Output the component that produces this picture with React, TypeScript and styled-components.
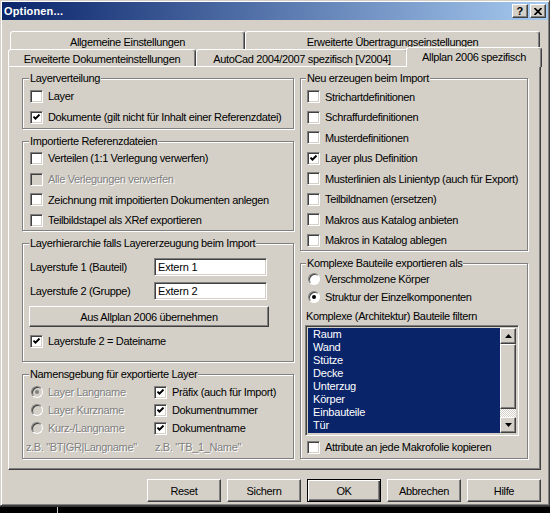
import React from 'react';
import styled, { createGlobalStyle, css } from 'styled-components';

const GlobalStyle = createGlobalStyle`
  html, body {
    margin: 0;
    padding: 0;
    background: #000;
  }
  body {
    font-family: 'Liberation Sans', Arial, sans-serif;
    font-size: 11px;
    letter-spacing: -0.35px;
    color: #000;
  }
  * {
    box-sizing: border-box;
  }
`;

const raised = css`
  border: 1px solid;
  border-color: #fff #404040 #404040 #fff;
  box-shadow: inset -1px -1px 0 #808080, inset 1px 1px 0 #d4d0c8;
`;

const sunken = css`
  border: 1px solid;
  border-color: #808080 #fff #fff #808080;
  box-shadow: inset 1px 1px 0 #404040, inset -1px -1px 0 #d4d0c8;
`;

const Window = styled.div`
  width: 550px;
  height: 506px;
  padding: 1px;
  background: #d4d0c8;
  border: 1px solid;
  border-color: #d4d0c8 #404040 #404040 #d4d0c8;
  box-shadow: inset 1px 1px 0 #fff, inset -1px -1px 0 #808080;
  display: flex;
  flex-direction: column;
`;

const TitleBar = styled.div`
  height: 18px;
  flex: none;
  display: flex;
  align-items: center;
  padding: 0 2px 0 2px;
  background: linear-gradient(to right, #0a246a, #a6caf0);
  color: #fff;
  font-weight: bold;
  font-size: 11px;
  letter-spacing: 0.15px;
`;

const TitleText = styled.span`
  flex: 1;
`;

const CaptionButtons = styled.div`
  display: flex;
  gap: 2px;
`;

const CaptionButton = styled.div`
  width: 16px;
  height: 14px;
  background: #d4d0c8;
  ${raised};
  color: #000;
  display: flex;
  align-items: center;
  justify-content: center;
  font-size: 11px;
  font-weight: bold;
  line-height: 1;
`;

const Body = styled.div`
  flex: 1;
  display: flex;
  flex-direction: column;
  padding: 11px 7px 0 6px;
`;

const TabRow = styled.div<{ $indent: number; $h: number }>`
  display: flex;
  align-items: flex-end;
  height: ${(p) => p.$h}px;
  padding-left: ${(p) => p.$indent}px;
`;

const Tab = styled.div<{ $w: number; $active?: boolean }>`
  flex: none;
  width: ${(p) => p.$w}px;
  height: 100%;
  background: #d4d0c8;
  border: 1px solid;
  border-bottom: none;
  border-color: #fff #404040 transparent #fff;
  border-radius: 3px 3px 0 0;
  box-shadow: inset -1px 0 0 #808080;
  display: flex;
  align-items: center;
  justify-content: center;
  padding-top: 2px;
  white-space: nowrap;
  ${(p) =>
    p.$active &&
    css`
      position: relative;
      z-index: 1;
      height: 20px;
      margin: 0 0 -1px -2px;
      padding-top: 0;
      padding-bottom: 2px;
    `}
`;

const TabPanel = styled.div`
  height: 404px;
  flex: none;
  border: 1px solid;
  border-color: #fff #404040 #404040 #fff;
  box-shadow: inset -1px -1px 0 #808080;
  padding: 5px 0 0 13px;
  display: grid;
  grid-template-columns: 272px 228px;
  column-gap: 6px;
  align-items: start;
`;

const Column = styled.div`
  display: flex;
  flex-direction: column;
  gap: 6px;
`;

const Group = styled.fieldset<{ $h: number; $pl?: number }>`
  margin: 0;
  min-width: 0;
  height: ${(p) => p.$h}px;
  padding: 0 6px 0 ${(p) => p.$pl ?? 7}px;
  border: 1px solid #808080;
  box-shadow: inset 1px 1px 0 #fff, 1px 1px 0 #fff;
`;

const Caption = styled.legend`
  margin-left: -1px;
  padding: 0 1px;
  line-height: 13px;
  background: #d4d0c8;
`;

const Stack = styled.div<{ $pt?: number }>`
  display: flex;
  flex-direction: column;
  padding-top: ${(p) => p.$pt ?? 0}px;
`;

const Row = styled.div<{ $h: number; $disabled?: boolean }>`
  display: flex;
  align-items: center;
  gap: 5px;
  height: ${(p) => p.$h}px;
  white-space: nowrap;
  ${(p) =>
    p.$disabled &&
    css`
      color: #808080;
      text-shadow: 1px 1px 0 #fff;
    `}
`;

const Box = styled.span<{ $disabled?: boolean }>`
  flex: none;
  width: 13px;
  height: 13px;
  background: ${(p) => (p.$disabled ? '#d4d0c8' : '#fff')};
  ${sunken};
  display: flex;
  align-items: center;
  justify-content: center;
`;

const RadioDot = styled.span<{ $on?: boolean; $disabled?: boolean }>`
  flex: none;
  position: relative;
  width: 12px;
  height: 12px;
  margin-left: 1px;
  border-radius: 50%;
  background: ${(p) => (p.$disabled ? '#d4d0c8' : '#fff')};
  border: 1px solid;
  border-color: #808080 #fff #fff #808080;
  box-shadow: inset 1px 1px 0 #404040;
  &::after {
    content: '';
    position: absolute;
    left: 3px;
    top: 3px;
    width: 4px;
    height: 4px;
    border-radius: 50%;
    background: ${(p) => (!p.$on ? 'transparent' : p.$disabled ? '#808080' : '#000')};
  }
`;

const FieldRow = styled.div<{ $mt?: number }>`
  display: grid;
  grid-template-columns: 124px 113px;
  align-items: center;
  height: 18px;
  margin-top: ${(p) => p.$mt ?? 0}px;
`;

const TextInput = styled.div`
  height: 18px;
  background: #fff;
  ${sunken};
  padding: 0 3px;
  display: flex;
  align-items: center;
  letter-spacing: -0.2px;
`;

const WideButton = styled.div`
  width: 240px;
  height: 21px;
  margin: 6px 0 4px -1px;
  background: #d4d0c8;
  ${raised};
  display: flex;
  align-items: center;
  justify-content: center;
`;

const NameGrid = styled.div`
  display: grid;
  grid-template-columns: 124px 1fr;
  padding-top: 2px;
`;

const Hint = styled.div<{ $shift?: number }>`
  height: 19px;
  display: flex;
  align-items: center;
  margin-left: ${(p) => p.$shift ?? 0}px;
  color: #808080;
  text-shadow: 1px 1px 0 #fff;
  white-space: nowrap;
`;

const Label = styled.div`
  height: 19px;
  display: flex;
  align-items: center;
  margin-left: -1px;
`;

const ListBox = styled.div`
  width: 214px;
  height: 111px;
  margin-left: -2px;
  ${sunken};
  padding: 2px;
  display: grid;
  grid-template-columns: 1fr 16px;
  overflow: hidden;
`;

const ListItems = styled.div`
  background: #0a246a;
  color: #fff;
  padding-left: 5px;
  overflow: hidden;
  line-height: 13px;
  letter-spacing: -0.2px;
`;

const ScrollBar = styled.div`
  display: flex;
  flex-direction: column;
`;

const ScrollPart = styled.div<{ $h?: number }>`
  flex: ${(p) => (p.$h ? `0 0 ${p.$h}px` : '1')};
  background: #d4d0c8;
  ${raised};
  display: flex;
  align-items: center;
  justify-content: center;
`;

const ScrollTrack = styled.div`
  flex: 1;
  background: repeating-conic-gradient(#d4d0c8 0 25%, #fff 0 50%) 0 0 / 2px 2px;
`;

const ButtonRow = styled.div`
  display: flex;
  justify-content: flex-end;
  gap: 6px;
  margin-top: 9px;
`;

const DialogButton = styled.div<{ $default?: boolean }>`
  width: 74px;
  height: 23px;
  background: #d4d0c8;
  ${raised};
  display: flex;
  align-items: center;
  justify-content: center;
  ${(p) =>
    p.$default &&
    css`
      border-color: #000;
      box-shadow: inset 1px 1px 0 #fff, inset -1px -1px 0 #404040, inset -2px -2px 0 #808080;
    `}
`;

const Taskbar = styled.div`
  height: 7px;
  background: #000;
  border-top: 1px solid #303030;
  display: flex;
`;

const TaskbarMark = styled.span`
  width: 1px;
  height: 6px;
  margin-left: 57px;
  background: #c8c8c8;
`;

const Check = () => (
  <svg width="7" height="7" viewBox="0 0 7 7">
    <polyline points="0.5,2.6 2.5,4.6 6.5,0.6" fill="none" stroke="#000" strokeWidth="2" />
  </svg>
);

const CloseGlyph = () => (
  <svg width="8" height="7" viewBox="0 0 8 7">
    <path d="M0.5 0 L7.5 7 M7.5 0 L0.5 7" stroke="#000" strokeWidth="1.7" />
  </svg>
);

const Arrow = ({ up }: { up?: boolean }) => (
  <svg width="7" height="4" viewBox="0 0 7 4">
    <polygon points={up ? '3.5,0 7,4 0,4' : '0,0 7,0 3.5,4'} fill="#000" />
  </svg>
);

const CheckItem = ({
  label,
  checked,
  disabled,
  h,
}: {
  label: string;
  checked?: boolean;
  disabled?: boolean;
  h: number;
}) => (
  <Row $h={h} $disabled={disabled}>
    <Box $disabled={disabled}>{checked && <Check />}</Box>
    <span>{label}</span>
  </Row>
);

const RadioItem = ({
  label,
  on,
  disabled,
  h,
}: {
  label: string;
  on?: boolean;
  disabled?: boolean;
  h: number;
}) => (
  <Row $h={h} $disabled={disabled}>
    <RadioDot $on={on} $disabled={disabled} />
    <span>{label}</span>
  </Row>
);

const importOptions = [
  { label: 'Strichartdefinitionen' },
  { label: 'Schraffurdefinitionen' },
  { label: 'Musterdefinitionen' },
  { label: 'Layer plus Definition', checked: true },
  { label: 'Musterlinien als Linientyp (auch für Export)' },
  { label: 'Teilbildnamen (ersetzen)' },
  { label: 'Makros aus Katalog anbieten' },
  { label: 'Makros in Katalog ablegen' },
];

const parts = ['Raum', 'Wand', 'Stütze', 'Decke', 'Unterzug', 'Körper', 'Einbauteile', 'Tür', 'Fenster'];

export default function App() {
  return (
    <>
      <GlobalStyle />
      <Window>
        <TitleBar>
          <TitleText>Optionen...</TitleText>
          <CaptionButtons>
            <CaptionButton>?</CaptionButton>
            <CaptionButton>
              <CloseGlyph />
            </CaptionButton>
          </CaptionButtons>
        </TitleBar>

        <Body>
          <TabRow $indent={2} $h={18}>
            <Tab $w={235}>Allgemeine Einstellungen</Tab>
            <Tab $w={295}>Erweiterte Übertragungseinstellungen</Tab>
          </TabRow>
          <TabRow $indent={0} $h={17}>
            <Tab $w={188}>Erweiterte Dokumenteinstellungen</Tab>
            <Tab $w={212}>AutoCad 2004/2007 spezifisch [V2004]</Tab>
            <Tab $w={136} $active>
              Allplan 2006 spezifisch
            </Tab>
          </TabRow>

          <TabPanel>
            <Column>
              <Group $h={57}>
                <Caption>Layerverteilung</Caption>
                <Stack $pt={0.5}>
                  <CheckItem h={21} label="Layer" />
                  <CheckItem h={21} checked label="Dokumente (gilt nicht für Inhalt einer Referenzdatei)" />
                </Stack>
              </Group>

              <Group $h={96}>
                <Caption>Importierte Referenzdateien</Caption>
                <Stack>
                  <CheckItem h={20.7} label="Verteilen (1:1 Verlegung verwerfen)" />
                  <CheckItem h={20.7} disabled label="Alle Verlegungen verwerfen" />
                  <CheckItem h={20.7} label="Zeichnung mit impoitierten Dokumenten anlegen" />
                  <CheckItem h={20.7} label="Teilbildstapel als XRef exportieren" />
                </Stack>
              </Group>

              <Group $h={125}>
                <Caption>Layerhierarchie falls Layererzeugung beim Import</Caption>
                <Stack $pt={8}>
                  <FieldRow>
                    <span>Layerstufe 1 (Bauteil)</span>
                    <TextInput>Extern 1</TextInput>
                  </FieldRow>
                  <FieldRow $mt={6}>
                    <span>Layerstufe 2 (Gruppe)</span>
                    <TextInput>Extern 2</TextInput>
                  </FieldRow>
                  <WideButton>Aus Allplan 2006 übernehmen</WideButton>
                  <CheckItem h={20} checked label="Layerstufe 2 = Dateiname" />
                </Stack>
              </Group>

              <Group $h={91}>
                <Caption>Namensgebung für exportierte Layer</Caption>
                <NameGrid>
                  <RadioItem h={18} on disabled label="Layer Langname" />
                  <CheckItem h={18} checked label="Präfix (auch für Import)" />
                  <RadioItem h={18} disabled label="Layer Kurzname" />
                  <CheckItem h={18} checked label="Dokumentnummer" />
                  <RadioItem h={18} disabled label="Kurz-/Langname" />
                  <CheckItem h={18} checked label="Dokumentname" />
                  <Hint $shift={-4}>z.B. "BT|GR|Langname"</Hint>
                  <Hint $shift={1}>z.B. "TB_1_Name"</Hint>
                </NameGrid>
              </Group>
            </Column>

            <Column>
              <Group $h={179} $pl={6}>
                <Caption>Neu erzeugen beim Import</Caption>
                <Stack $pt={1.5}>
                  {importOptions.map((o) => (
                    <CheckItem key={o.label} h={20.5} checked={o.checked} label={o.label} />
                  ))}
                </Stack>
              </Group>

              <Group $h={202} $pl={6}>
                <Caption>Komplexe Bauteile exportieren als</Caption>
                <Stack>
                  <RadioItem h={18} label="Verschmolzene Körper" />
                  <RadioItem h={18} on label="Struktur der Einzelkomponenten" />
                  <Label>Komplexe (Architektur) Bauteile filtern</Label>
                  <ListBox>
                    <ListItems>
                      {parts.map((p) => (
                        <div key={p}>{p}</div>
                      ))}
                    </ListItems>
                    <ScrollBar>
                      <ScrollPart $h={16}>
                        <Arrow up />
                      </ScrollPart>
                      <ScrollPart $h={65} />
                      <ScrollTrack />
                      <ScrollPart $h={16}>
                        <Arrow />
                      </ScrollPart>
                    </ScrollBar>
                  </ListBox>
                  <Stack $pt={1}>
                    <CheckItem h={20} label="Attribute an jede Makrofolie kopieren" />
                  </Stack>
                </Stack>
              </Group>
            </Column>
          </TabPanel>

          <ButtonRow>
            <DialogButton>Reset</DialogButton>
            <DialogButton>Sichern</DialogButton>
            <DialogButton $default>OK</DialogButton>
            <DialogButton>Abbrechen</DialogButton>
            <DialogButton>Hilfe</DialogButton>
          </ButtonRow>
        </Body>
      </Window>
      <Taskbar>
        <TaskbarMark />
      </Taskbar>
    </>
  );
}
